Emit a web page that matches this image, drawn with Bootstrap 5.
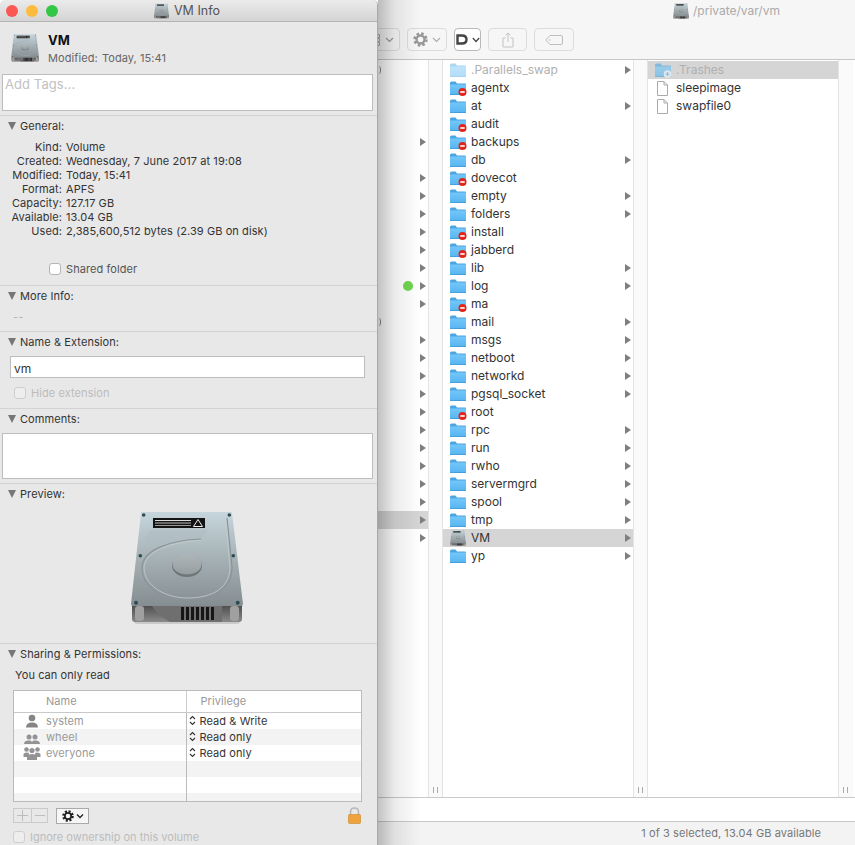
<!DOCTYPE html>
<html lang="en">
<head>
<meta charset="utf-8">
<title>VM Info</title>
<link rel="stylesheet" href="https://cdn.jsdelivr.net/npm/bootstrap@5.3.0/dist/css/bootstrap.min.css">
<style>
html,body{height:845px;overflow:hidden}
body{font-family:Inter,"Liberation Sans",sans-serif;font-size:11px;line-height:14px;color:#333;background:#fff;letter-spacing:.08px}
.defs{position:absolute;width:0;height:0}
.info{width:378px;height:845px;flex:none;background:#e8e8e8;border-right:1px solid #a9a9a9;border-radius:5px 5px 0 0;position:relative;z-index:2;overflow:hidden}
.titlebar{height:22px;background:linear-gradient(#ebebeb,#d4d4d4);border-bottom:1px solid #b5b5b5;padding-left:6px;position:relative;color:#555;font-size:12.5px;letter-spacing:0}
.light{width:12px;height:12px;border-radius:50%;margin-right:8px}
.l-r{background:#fc5753}.l-y{background:#fdbc40}.l-g{background:#33c748}
.title-c{position:absolute;left:154px;top:3px;height:16px;gap:5px}
.sec{border-bottom:1px solid #d3d3d3;padding-right:4px}
.s-head{height:94px}
.s-gen{height:170px}
.s-more{height:46px}
.s-name{height:77px}
.s-com{height:75px}
.s-pre{height:160px}
.sec-t{height:20px;padding-left:8px;color:#333}
.down{width:0;height:0;border-left:4.5px solid transparent;border-right:4.5px solid transparent;border-top:8px solid #777;margin-right:4px}
.big-ico{width:28px;height:30px;margin:11px 9px 0 11px}
.vm-name{font-size:13px;font-weight:700;color:#111;line-height:16px;margin-top:10px}
.vm-mod{color:#666;margin-top:3px}
.vm-mod span{margin-right:1px}
.box{background:#fff;border:1px solid #bdbdbd;border-radius:0;padding:0}
.tags{height:37px;margin:9px 0 0 2px;width:371px;color:#c2c2c2;font-size:13px;line-height:19px;padding-left:2px}
.kv{display:grid;grid-template-columns:62px 1fr;column-gap:4px;margin-top:4px}
.kv dt{font-weight:400;text-align:right;margin:0}
.kv dd{margin:0}
.check{margin:0!important;width:12px;height:12px;border-radius:3px!important;border:1px solid #b5b5b5;background-color:#fff;flex:none}
.check-dis{background-color:#eee;border-color:#cfcfcf;opacity:1!important}
.shared{margin:24px 0 0 49px;gap:5px;height:14px;color:#555}
.dashes{margin:4px 0 0 13px;color:#b5b5b5}
.name-in{width:355px;height:22px;margin:4px 0 0 10px;color:#333;font-size:12px;line-height:23px;padding-left:3px}
.hide{margin:8px 0 0 14px;gap:5px;height:14px;color:#bcbcbc}
.com-in{width:371px;height:46px;margin:4px 0 0 2px}
.disk{width:113px;height:115px;display:block;margin:6px 0 0 130px}
.only{margin:4px 0 0 15px;color:#333}
.ptable{width:349px;height:112px;margin:8px 0 0 13px;background:#fff;border:1px solid #bbb;overflow:hidden}
.ptable table{width:100%;margin:0;table-layout:fixed;border-collapse:collapse}
.ptable th{height:21px;font-weight:400;color:#999;border-bottom:1px solid #c9c9c9;padding:0;vertical-align:middle}
.ptable td{height:16px;padding:0;border:0;background:transparent;color:#999;line-height:16px;box-shadow:none}
.ptable td+td,.ptable th+th{border-left:1px solid #bbb;color:#333}
.ptable th+th{color:#999;padding-left:14px;border-left-color:#ccc}
.ptable th:first-child{padding-left:32px;width:172px}
.ptable td+td{padding-left:2px}
.ptable tr.alt td{background:#f3f3f3}
.cell-u{padding-left:9px;gap:5px}
.cell-u svg{width:18px;height:14px;flex:none}
.updown{width:7px;height:11px;margin-right:4px;flex:none}
.ctrl{margin:5px 15px 0 13px;height:17px}
.plusminus{width:35px;height:15px;border:1px solid #cacaca}
.plusminus svg{width:17px;height:13px;flex:none}
.plusminus svg+svg{border-left:1px solid #cacaca}
.gearbtn{width:33px;height:16px;margin-left:8px;background:#f6f6f6;border:1px solid #aaa;gap:2px}
.lock{width:15px;height:17px;margin-left:auto}
.ignore{margin:6px 0 0 13px;gap:5px;height:14px;color:#bcbcbc;letter-spacing:0}

.finder{flex:1;min-width:0;height:845px;position:relative}
.finder::before{content:"";position:absolute;left:0;top:0;bottom:0;width:42px;background:linear-gradient(90deg,rgba(0,0,0,.24),rgba(0,0,0,.08) 40%,rgba(0,0,0,0));pointer-events:none;z-index:1}
.toolbar{height:60px;background:#f6f6f6;border-bottom:1px solid #c6c6c6;position:relative}
.path{position:absolute;left:295px;top:3px;height:16px;color:#aaa;font-size:12px;gap:4px;letter-spacing:0}
.path svg{width:16px;height:16px}
.tbtn{height:23px;border:1px solid #dcdcdc;border-radius:4px;background:#f6f6f6;padding:0;color:#aaa}
.tools{padding:28px 0 0 0;margin-left:-7px;gap:7px}
.t1{width:29px;gap:5px;padding-right:5px}.t2{width:40px}.t3{width:27px;background:#fff;border-color:#b9b9b9}.t4{width:39px}.t5{width:40px}
.cols{height:737px}
.col-a,.col-b,.col-c{overflow:hidden;padding-top:1px}
.col-a{width:50px}
.col-b{width:190px}
.col-c{width:190px}
.resize{width:15px;background:#fafafa;border-left:1px solid #e4e4e4;border-right:1px solid #e4e4e4;position:relative;color:#999;flex:none}
.resize::after{content:"";position:absolute;left:4px;bottom:4px;width:5px;height:6px;border-left:1px solid #aaa;border-right:1px solid #aaa}
.col-c+.resize{border-right:0}
.rw{height:18px;line-height:18px;font-size:12px;color:#333;padding-right:2px;white-space:nowrap;position:relative;letter-spacing:0}
.col-b .rw{padding-left:6px}
.col-c .rw{padding-left:9px}
.rw.sel{background:#d5d5d5}
.rw.dim{color:#b0b0b0}
.rw svg.fo{width:18px;height:16px;margin-right:4px;flex:none}
.col-c .rw svg.fo{margin-left:-3px}
.rw svg.doc{width:11px;height:15px;margin-right:8px;flex:none}
.tri{width:0;height:0;border-top:4px solid transparent;border-bottom:4px solid transparent;border-left:6px solid #7f7f7f;margin-left:auto;flex:none}
.frag{display:block;width:3px;height:8px;border-right:1px solid #8a8a8a;border-radius:0 4px 4px 0}
.dot{width:10px;height:10px;border-radius:50%;background:#6fd64f;position:absolute;left:25px;top:4px}
.pathbar{height:25px;border-top:1px solid #c9c9c9;border-bottom:1px solid #c9c9c9;background:#fff}
.status{height:23px;background:#f3f3f3;color:#777;line-height:23px;padding-right:34px;text-align:right}
</style>
</head>
<body class="d-flex">
<svg class="defs" aria-hidden="true">
  <defs>
    <linearGradient id="gBody" x1="0" y1="0" x2="0" y2="1"><stop offset="0" stop-color="#c6d6dc"/><stop offset=".45" stop-color="#a8b4b8"/><stop offset="1" stop-color="#858d90"/></linearGradient>
    <linearGradient id="gBase" x1="0" y1="0" x2="0" y2="1"><stop offset="0" stop-color="#4c4c4c"/><stop offset="1" stop-color="#8a8a8a"/></linearGradient>
    <linearGradient id="gPlat" x1="0" y1="0" x2="0" y2="1"><stop offset="0" stop-color="#aeb6b9"/><stop offset="1" stop-color="#959d9f"/></linearGradient>
    <linearGradient id="gFold" x1="0" y1="0" x2="0" y2="1"><stop offset="0" stop-color="#74c7f8"/><stop offset="1" stop-color="#57b4f0"/></linearGradient>
    <symbol id="disk" viewBox="0 0 113 115">
      <rect x="4" y="108" width="106" height="6" rx="3" fill="#000" opacity=".13"/>
      <path d="M2 95H112V109Q112 112 109 112H5Q2 112 2 109Z" fill="url(#gBase)"/>
      <path d="M22 96H92V112H40Q26 104 22 96Z" fill="#6f6f6f"/>
      <rect x="5" y="96" width="9" height="15" rx="3" fill="#a0a0a0"/>
      <rect x="100" y="96" width="9" height="15" rx="3" fill="#a0a0a0"/>
      <path d="M11 3Q11 2 12 2H101Q102 2 102 3L113 94Q113 96 111 96H3Q1 96 1 94Z" fill="url(#gBody)"/>
      <path d="M14 30L20 20H78L71 29Q40 30 22 37Z" fill="#aebcc1" opacity=".5"/>
      <path d="M71 29C40 30 12 40 12 58C12 78 35 90 57 90C85 90 102 78 102 57L97 8" fill="none" stroke="#8b9497" stroke-width="1.200"/>
      <path d="M71 30.500C42 31.500 14 41 14 58C14 76 36 88 57 88C84 88 100 77 100 57L95.500 10" fill="none" stroke="#c3ccce" stroke-width=".8"/>
      <ellipse cx="57" cy="56" rx="15" ry="11" fill="#6f767a"/>
      <ellipse cx="57" cy="54.500" rx="14.500" ry="10" fill="url(#gPlat)"/>
      <rect x="23" y="8" width="52" height="10" fill="#141414"/>
      <rect x="25" y="10" width="36" height="1" fill="#ddd"/>
      <rect x="25" y="12.500" width="36" height="1" fill="#bbb"/>
      <rect x="25" y="15" width="36" height="1" fill="#999"/>
      <path d="M68 9.500L72.500 16.500H63.500Z" fill="none" stroke="#eee" stroke-width="1"/>
      <g fill="#2e4a52"><circle cx="13.700" cy="5" r="1.800"/><circle cx="99.300" cy="5" r="1.800"/><circle cx="10.300" cy="45.700" r="1.800"/><circle cx="103.300" cy="45.700" r="1.800"/><circle cx="6" cy="92.700" r="2"/><circle cx="107.700" cy="92.700" r="2"/></g>
      <g fill="#161616"><rect x="51" y="97" width="3" height="13"/><rect x="56" y="97" width="3" height="13"/><rect x="61" y="97" width="3" height="13"/><rect x="66" y="97" width="3" height="13"/><rect x="71" y="97" width="3" height="13"/><rect x="76" y="97" width="3" height="13"/><rect x="81" y="97" width="3" height="13"/></g>
    </symbol>
    <symbol id="folder" viewBox="0 0 18 16">
      <path d="M1 3Q1 1.500 2.500 1.500H6.500L8 3.500H16Q17 3.500 17 4.500V6H1Z" fill="#4aa6e2"/>
      <path d="M1 4.500H17V14Q17 15 16 15H2Q1 15 1 14Z" fill="url(#gFold)"/>
      <rect x="1" y="14.200" width="16" height=".8" fill="#3f9bd8"/>
    </symbol>
    <symbol id="folder-no" viewBox="0 0 18 16">
      <use href="#folder" width="18" height="16"/>
      <circle cx="13.500" cy="12" r="4" fill="#e0261c"/>
      <rect x="11.300" y="11.200" width="4.400" height="1.600" fill="#fff"/>
    </symbol>
    <symbol id="folder-add" viewBox="0 0 18 16">
      <use href="#folder" width="18" height="16"/>
      <circle cx="13.500" cy="12" r="3.800" fill="#e8f5fd"/>
      <path d="M11.500 12H15.500M13.500 10V14" stroke="#55aee8" stroke-width="1.200"/>
    </symbol>
    <symbol id="user" viewBox="0 0 18 14"><circle cx="9" cy="4" r="3.300" fill="#858585"/><path d="M3 13.500Q3 9.500 7.500 8.500H10.500Q15 9.500 15 13.500Z" fill="#858585"/></symbol>
    <symbol id="group" viewBox="0 0 18 14"><g fill="#939393"><circle cx="6" cy="7" r="2.500"/><circle cx="12" cy="7" r="2.500"/><path d="M1 14Q1 11 4.500 10.500H7.500Q8.500 11 9 12Q9.500 11 10.500 10.500H13.500Q17 11 17 14Z"/></g></symbol>
    <symbol id="everyone" viewBox="0 0 18 14"><g fill="#939393"><circle cx="3.500" cy="3.500" r="2.300"/><circle cx="14.500" cy="3.500" r="2.300"/><circle cx="9" cy="4.500" r="2.600"/><path d="M0.500 11V8Q1 6.500 3.500 6.500T6 7.500V11ZM12 7.500Q12.500 6.500 14.500 6.500T17.500 8V11H12Z"/><path d="M4 14V10.500Q5 8 9 8T14 10.500V14Z"/></g></symbol>
    <symbol id="ud" viewBox="0 0 7 11"><path d="M1 4L3.500 1.500L6 4M1 7L3.500 9.500L6 7" fill="none" stroke="#333" stroke-width="1.100"/></symbol>
  </defs>
</svg>

<aside class="info">
  <div class="titlebar d-flex align-items-center">
    <span class="light l-r"></span><span class="light l-y"></span><span class="light l-g"></span>
    <div class="title-c d-flex align-items-center"><svg width="15" height="16"><use href="#disk" width="15" height="16"/></svg><span>VM Info</span></div>
  </div>

  <section class="sec s-head">
    <div class="d-flex">
      <svg class="big-ico"><use href="#disk" width="28" height="30"/></svg>
      <div>
        <div class="vm-name">VM</div>
        <div class="vm-mod"><span>Modified:</span> Today, 15:41</div>
      </div>
    </div>
    <div class="box tags">Add Tags...</div>
  </section>

  <section class="sec s-gen">
    <div class="sec-t d-flex align-items-center"><i class="down"></i>General:</div>
    <dl class="kv mb-0">
      <dt>Kind:</dt><dd>Volume</dd>
      <dt>Created:</dt><dd>Wednesday, 7 June 2017 at 19:08</dd>
      <dt>Modified:</dt><dd>Today, 15:41</dd>
      <dt>Format:</dt><dd>APFS</dd>
      <dt>Capacity:</dt><dd>127.17 GB</dd>
      <dt>Available:</dt><dd>13.04 GB</dd>
      <dt>Used:</dt><dd>2,385,600,512 bytes (2.39 GB on disk)</dd>
    </dl>
    <div class="shared d-flex align-items-center"><input class="form-check-input check" type="checkbox" aria-label="Shared folder"><span>Shared folder</span></div>
  </section>

  <section class="sec s-more">
    <div class="sec-t d-flex align-items-center"><i class="down"></i>More Info:</div>
    <div class="dashes">--</div>
  </section>

  <section class="sec s-name">
    <div class="sec-t d-flex align-items-center"><i class="down"></i>Name &amp; Extension:</div>
    <div class="box name-in">vm</div>
    <div class="hide d-flex align-items-center"><input class="form-check-input check check-dis" type="checkbox" disabled aria-label="Hide extension"><span>Hide extension</span></div>
  </section>

  <section class="sec s-com">
    <div class="sec-t d-flex align-items-center"><i class="down"></i>Comments:</div>
    <div class="box com-in"></div>
  </section>

  <section class="sec s-pre">
    <div class="sec-t d-flex align-items-center"><i class="down"></i>Preview:</div>
    <svg class="disk"><use href="#disk" width="113" height="115"/></svg>
  </section>

  <section>
    <div class="sec-t d-flex align-items-center"><i class="down"></i>Sharing &amp; Permissions:</div>
    <div class="only">You can only read</div>
    <div class="ptable">
      <table class="table">
        <thead><tr><th>Name</th><th>Privilege</th></tr></thead>
        <tbody>
          <tr><td><div class="cell-u d-flex align-items-center"><svg><use href="#user" width="18" height="14"/></svg>system</div></td><td><div class="d-flex align-items-center"><svg class="updown"><use href="#ud" width="7" height="11"/></svg>Read &amp; Write</div></td></tr>
          <tr class="alt"><td><div class="cell-u d-flex align-items-center"><svg><use href="#group" width="18" height="14"/></svg>wheel</div></td><td><div class="d-flex align-items-center"><svg class="updown"><use href="#ud" width="7" height="11"/></svg>Read only</div></td></tr>
          <tr><td><div class="cell-u d-flex align-items-center"><svg><use href="#everyone" width="18" height="14"/></svg>everyone</div></td><td><div class="d-flex align-items-center"><svg class="updown"><use href="#ud" width="7" height="11"/></svg>Read only</div></td></tr>
          <tr class="alt"><td></td><td></td></tr>
          <tr><td></td><td></td></tr>
          <tr class="alt"><td></td><td></td></tr>
        </tbody>
      </table>
    </div>
    <div class="ctrl d-flex align-items-center">
      <div class="plusminus d-flex">
        <svg viewBox="0 0 17 13"><path d="M3 6.500H14M8.500 1V12" stroke="#bcbcbc" stroke-width="1"/></svg>
        <svg viewBox="0 0 17 13"><path d="M3 6.500H14" stroke="#bcbcbc" stroke-width="1"/></svg>
      </div>
      <div class="gearbtn d-flex align-items-center justify-content-center">
        <svg width="12" height="12" viewBox="0 0 12 12"><circle cx="6" cy="6" r="4.600" fill="none" stroke="#222" stroke-width="2.400" stroke-dasharray="2 1.610"/><circle cx="6" cy="6" r="3.200" fill="none" stroke="#222" stroke-width="1.800"/></svg>
        <svg width="8" height="6" viewBox="0 0 8 6"><path d="M1 1.500L4 4.500L7 1.500" fill="none" stroke="#222" stroke-width="1.300"/></svg>
      </div>
      <svg class="lock" viewBox="0 0 15 17"><path d="M3.500 8V5Q3.500 1 7.500 1T11.500 5V8" fill="none" stroke="#b8b8b8" stroke-width="1.600"/><rect x="1.500" y="7.500" width="12" height="9" rx="1" fill="#f0a23c" stroke="#c98427" stroke-width=".6"/></svg>
    </div>
    <div class="ignore d-flex align-items-center"><input class="form-check-input check check-dis" type="checkbox" disabled aria-label="Ignore ownership on this volume"><span>Ignore ownership on this volume</span></div>
  </section>
</aside>

<main class="finder">
  <header class="toolbar">
    <div class="path d-flex align-items-center"><svg><use href="#disk" width="16" height="16"/></svg><span>/private/var/vm</span></div>
    <div class="tools d-flex">
      <div class="tbtn t1 d-flex align-items-center justify-content-end">
        <svg width="6" height="12" viewBox="0 0 6 12"><path d="M.5 .5H5.500V3.500H.5ZM.5 4.500H5.500V7.500H.5ZM.5 8.500H5.500V11.500H.5Z" fill="none" stroke="#aaa" stroke-width="1"/></svg>
        <svg width="9" height="6" viewBox="0 0 9 6"><path d="M1 1L4.500 4.500L8 1" fill="none" stroke="#999" stroke-width="1.200"/></svg>
      </div>
      <div class="tbtn t2 d-flex align-items-center justify-content-center gap-1">
        <svg width="15" height="15" viewBox="0 0 15 15"><circle cx="7.500" cy="7.500" r="5.800" fill="none" stroke="#999" stroke-width="2.800" stroke-dasharray="2.500 2.050"/><circle cx="7.500" cy="7.500" r="4" fill="none" stroke="#999" stroke-width="2.400"/></svg>
        <svg width="9" height="6" viewBox="0 0 9 6"><path d="M1 1L4.500 4.500L8 1" fill="none" stroke="#aaa" stroke-width="1.100"/></svg>
      </div>
      <div class="tbtn t3 d-flex align-items-center justify-content-center gap-1">
        <svg width="12" height="11" viewBox="0 0 12 11"><path d="M1.500 1.500H6Q10.500 1.500 10.500 5.500T6 9.500H1.500Z" fill="none" stroke="#444" stroke-width="2.400"/></svg>
        <svg width="8" height="6" viewBox="0 0 8 6"><path d="M.8 1L4 4.500L7.200 1" fill="none" stroke="#444" stroke-width="1.200"/></svg>
      </div>
      <div class="tbtn t4 d-flex align-items-center justify-content-center">
        <svg width="12" height="16" viewBox="0 0 12 16"><path d="M3.500 6H1V15H11V6H8.500M6 10V1M3.500 3.300L6 1L8.500 3.300" fill="none" stroke="#c4c4c4" stroke-width="1"/></svg>
      </div>
      <div class="tbtn t5 d-flex align-items-center justify-content-center">
        <svg width="18" height="10" viewBox="0 0 18 10"><path d="M5 .5H16Q17.500 .5 17.500 2V8Q17.500 9.500 16 9.500H5L.7 5Z" fill="none" stroke="#bdbdbd" stroke-width="1"/><circle cx="4.500" cy="5" r=".8" fill="#bdbdbd"/></svg>
      </div>
    </div>
  </header>

  <div class="cols d-flex">
    <div class="col-a">
      <div class="rw d-flex align-items-center"><i class="frag"></i></div>
      <div class="rw"></div><div class="rw"></div><div class="rw"></div>
      <div class="rw d-flex align-items-center"><i class="tri"></i></div>
      <div class="rw"></div>
      <div class="rw d-flex align-items-center"><i class="tri"></i></div>
      <div class="rw d-flex align-items-center"><i class="tri"></i></div>
      <div class="rw d-flex align-items-center"><i class="tri"></i></div>
      <div class="rw d-flex align-items-center"><i class="tri"></i></div>
      <div class="rw d-flex align-items-center"><i class="tri"></i></div>
      <div class="rw d-flex align-items-center"><i class="tri"></i></div>
      <div class="rw d-flex align-items-center"><i class="dot"></i><i class="tri"></i></div>
      <div class="rw d-flex align-items-center"><i class="tri"></i></div>
      <div class="rw d-flex align-items-center"><i class="frag"></i></div>
      <div class="rw d-flex align-items-center"><i class="tri"></i></div>
      <div class="rw d-flex align-items-center"><i class="tri"></i></div>
      <div class="rw d-flex align-items-center"><i class="tri"></i></div>
      <div class="rw d-flex align-items-center"><i class="tri"></i></div>
      <div class="rw d-flex align-items-center"><i class="tri"></i></div>
      <div class="rw d-flex align-items-center"><i class="tri"></i></div>
      <div class="rw d-flex align-items-center"><i class="tri"></i></div>
      <div class="rw d-flex align-items-center"><i class="tri"></i></div>
      <div class="rw d-flex align-items-center"><i class="tri"></i></div>
      <div class="rw d-flex align-items-center"><i class="tri"></i></div>
      <div class="rw sel d-flex align-items-center"><i class="tri"></i></div>
      <div class="rw d-flex align-items-center"><i class="tri"></i></div>
    </div>
    <div class="resize"></div>
    <div class="col-b">
      <div class="rw dim d-flex align-items-center"><svg class="fo" opacity=".45"><use href="#folder" width="18" height="16"/></svg>.Parallels_swap<i class="tri"></i></div>
      <div class="rw d-flex align-items-center"><svg class="fo"><use href="#folder-no" width="18" height="16"/></svg>agentx</div>
      <div class="rw d-flex align-items-center"><svg class="fo"><use href="#folder" width="18" height="16"/></svg>at<i class="tri"></i></div>
      <div class="rw d-flex align-items-center"><svg class="fo"><use href="#folder-no" width="18" height="16"/></svg>audit</div>
      <div class="rw d-flex align-items-center"><svg class="fo"><use href="#folder-no" width="18" height="16"/></svg>backups</div>
      <div class="rw d-flex align-items-center"><svg class="fo"><use href="#folder" width="18" height="16"/></svg>db<i class="tri"></i></div>
      <div class="rw d-flex align-items-center"><svg class="fo"><use href="#folder-no" width="18" height="16"/></svg>dovecot</div>
      <div class="rw d-flex align-items-center"><svg class="fo"><use href="#folder" width="18" height="16"/></svg>empty<i class="tri"></i></div>
      <div class="rw d-flex align-items-center"><svg class="fo"><use href="#folder" width="18" height="16"/></svg>folders<i class="tri"></i></div>
      <div class="rw d-flex align-items-center"><svg class="fo"><use href="#folder-no" width="18" height="16"/></svg>install</div>
      <div class="rw d-flex align-items-center"><svg class="fo"><use href="#folder-no" width="18" height="16"/></svg>jabberd</div>
      <div class="rw d-flex align-items-center"><svg class="fo"><use href="#folder" width="18" height="16"/></svg>lib<i class="tri"></i></div>
      <div class="rw d-flex align-items-center"><svg class="fo"><use href="#folder" width="18" height="16"/></svg>log<i class="tri"></i></div>
      <div class="rw d-flex align-items-center"><svg class="fo"><use href="#folder-no" width="18" height="16"/></svg>ma</div>
      <div class="rw d-flex align-items-center"><svg class="fo"><use href="#folder" width="18" height="16"/></svg>mail<i class="tri"></i></div>
      <div class="rw d-flex align-items-center"><svg class="fo"><use href="#folder" width="18" height="16"/></svg>msgs<i class="tri"></i></div>
      <div class="rw d-flex align-items-center"><svg class="fo"><use href="#folder" width="18" height="16"/></svg>netboot<i class="tri"></i></div>
      <div class="rw d-flex align-items-center"><svg class="fo"><use href="#folder" width="18" height="16"/></svg>networkd<i class="tri"></i></div>
      <div class="rw d-flex align-items-center"><svg class="fo"><use href="#folder" width="18" height="16"/></svg>pgsql_socket<i class="tri"></i></div>
      <div class="rw d-flex align-items-center"><svg class="fo"><use href="#folder-no" width="18" height="16"/></svg>root</div>
      <div class="rw d-flex align-items-center"><svg class="fo"><use href="#folder" width="18" height="16"/></svg>rpc<i class="tri"></i></div>
      <div class="rw d-flex align-items-center"><svg class="fo"><use href="#folder" width="18" height="16"/></svg>run<i class="tri"></i></div>
      <div class="rw d-flex align-items-center"><svg class="fo"><use href="#folder" width="18" height="16"/></svg>rwho<i class="tri"></i></div>
      <div class="rw d-flex align-items-center"><svg class="fo"><use href="#folder" width="18" height="16"/></svg>servermgrd<i class="tri"></i></div>
      <div class="rw d-flex align-items-center"><svg class="fo"><use href="#folder" width="18" height="16"/></svg>spool<i class="tri"></i></div>
      <div class="rw d-flex align-items-center"><svg class="fo"><use href="#folder" width="18" height="16"/></svg>tmp<i class="tri"></i></div>
      <div class="rw sel d-flex align-items-center"><svg class="fo"><use href="#disk" width="18" height="16"/></svg>VM<i class="tri"></i></div>
      <div class="rw d-flex align-items-center"><svg class="fo"><use href="#folder" width="18" height="16"/></svg>yp<i class="tri"></i></div>
    </div>
    <div class="resize"></div>
    <div class="col-c">
      <div class="rw sel dim d-flex align-items-center"><svg class="fo" opacity=".6"><use href="#folder-add" width="18" height="16"/></svg>.Trashes</div>
      <div class="rw d-flex align-items-center"><svg class="doc" viewBox="0 0 11 15"><path d="M.5 .5H7L10.500 4V14.500H.5Z M7 .5V4H10.500" fill="#fff" stroke="#aaa" stroke-width="1"/></svg>sleepimage</div>
      <div class="rw d-flex align-items-center"><svg class="doc" viewBox="0 0 11 15"><path d="M.5 .5H7L10.500 4V14.500H.5Z M7 .5V4H10.500" fill="#fff" stroke="#aaa" stroke-width="1"/></svg>swapfile0</div>
    </div>
    <div class="resize"></div>
  </div>
  <div class="pathbar"></div>
  <footer class="status">1 of 3 selected, 13.04 GB available</footer>
</main>
<script src="https://cdn.jsdelivr.net/npm/bootstrap@5.3.0/dist/js/bootstrap.bundle.min.js"></script>
</body>
</html>
